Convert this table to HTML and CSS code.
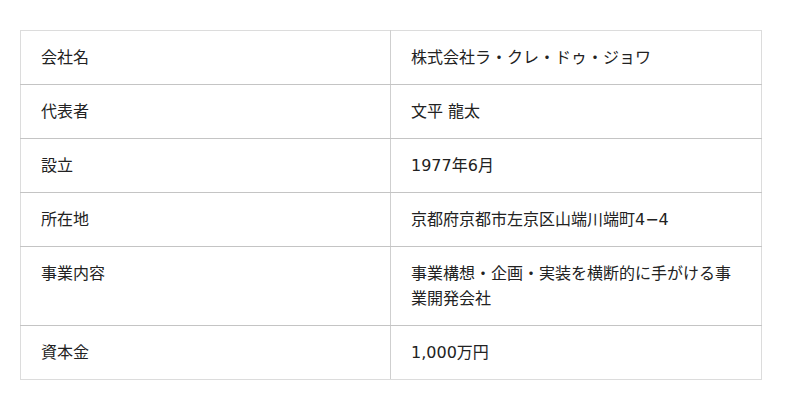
FILE: index.html
```html
<!DOCTYPE html>
<html>
<head>
<meta charset="utf-8">
<link rel="stylesheet" href="styles.css">
</head>
<body>
<div class="wrap">
  <table class="info">
    <colgroup><col class="c1"><col class="c2"></colgroup>
    <tr><th>会社名</th><td>株式会社ラ・クレ・ドゥ・ジョワ</td></tr>
    <tr><th>代表者</th><td>文平 龍太</td></tr>
    <tr><th>設立</th><td>1977年6月</td></tr>
    <tr><th>所在地</th><td>京都府京都市左京区山端川端町4−4</td></tr>
    <tr><th>事業内容</th><td>事業構想・企画・実装を横断的に手がける事業開発会社</td></tr>
    <tr><th>資本金</th><td>1,000万円</td></tr>
  </table>
</div>
</body>
</html>
```
FILE: styles.css
```css
html, body {
  margin: 0;
  padding: 0;
  background: #fff;
}
.wrap {
  padding: 30px 20px;
}
.info {
  width: 741px;
  border-collapse: collapse;
  table-layout: fixed;
  font-family: "DejaVu Sans", "Noto Sans CJK JP", sans-serif;
  font-size: 16px;
  line-height: 25px;
  color: #222;
}
.c1 { width: 370px; }
.c2 { width: 371px; }
.info th, .info td {
  text-align: left;
  font-weight: normal;
  vertical-align: top;
  padding: 14px 20px;
  border: 1px solid #dcdcdc;
  border-bottom-color: #c4c4c4;
}
.info th {
  border-right-color: #cfcfcf;
}
.info tr:last-child th, .info tr:last-child td {
  border-bottom-color: #dcdcdc;
}
```
